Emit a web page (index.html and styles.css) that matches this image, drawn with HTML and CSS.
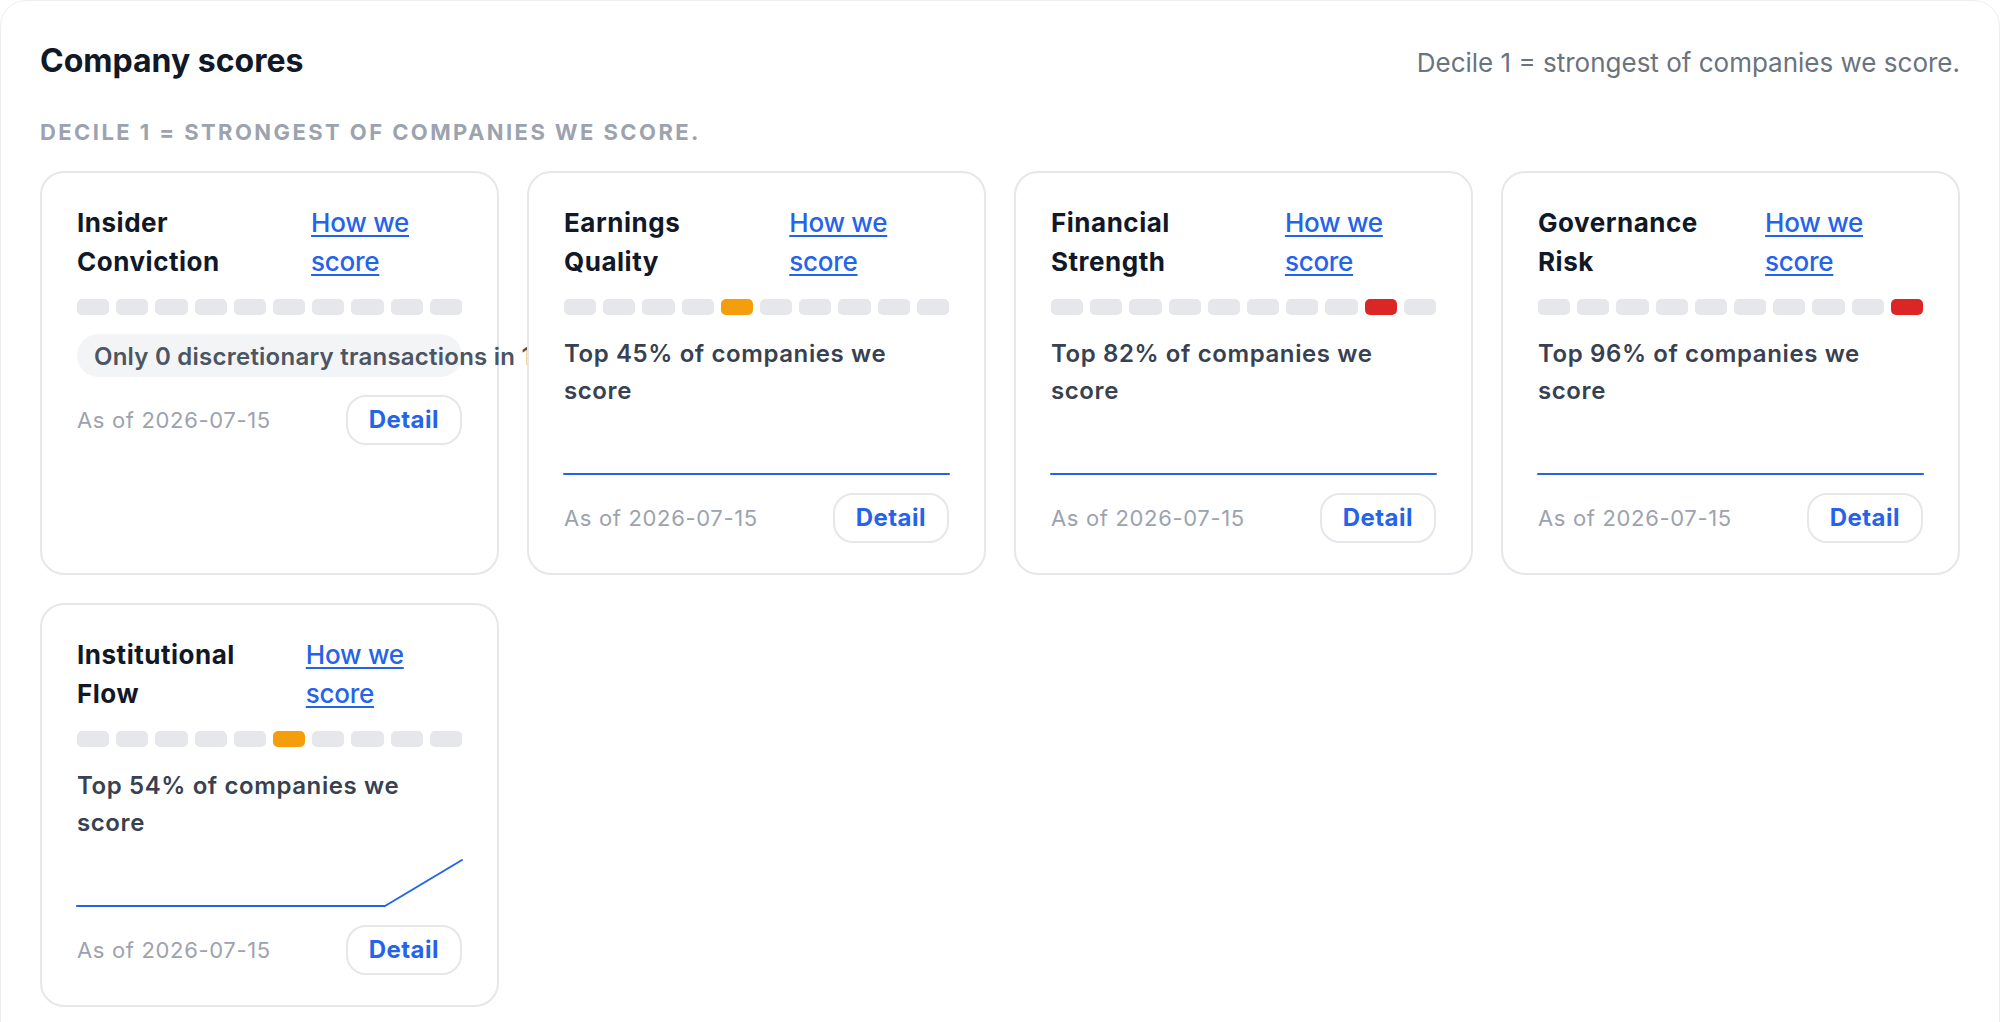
FILE: index.html
```html
<!DOCTYPE html>
<html lang="en">
<head>
<meta charset="utf-8">
<title>Company scores</title>
<link rel="stylesheet" href="styles.css">
</head>
<body>
<section class="panel">
  <header class="panel-head">
    <h2 class="panel-title">Company scores</h2>
    <p class="panel-note">Decile 1 = strongest of companies we score.</p>
  </header>
  <p class="panel-sub">Decile 1 = strongest of companies we score.</p>

  <div class="grid">
    <article class="card">
      <div class="card-head">
        <h3 class="card-title">Insider Conviction</h3>
        <a class="card-link" href="#">How we score</a>
      </div>
      <div class="deciles">
        <span class="seg"></span><span class="seg"></span><span class="seg"></span><span class="seg"></span><span class="seg"></span><span class="seg"></span><span class="seg"></span><span class="seg"></span><span class="seg"></span><span class="seg"></span>
      </div>
      <div class="pill"><span class="pill-text">Only 0 discretionary transactions in 180 days</span></div>
      <div class="card-foot">
        <span class="asof">As of 2026-07-15</span>
        <button class="detail">Detail</button>
      </div>
    </article>

    <article class="card">
      <div class="card-head">
        <h3 class="card-title">Earnings Quality</h3>
        <a class="card-link" href="#">How we score</a>
      </div>
      <div class="deciles">
        <span class="seg"></span><span class="seg"></span><span class="seg"></span><span class="seg"></span><span class="seg amber"></span><span class="seg"></span><span class="seg"></span><span class="seg"></span><span class="seg"></span><span class="seg"></span>
      </div>
      <p class="rank">Top 45% of companies we score</p>
      <svg class="spark" viewBox="0 0 100 48" preserveAspectRatio="none"><polyline points="0,47 20,47 40,47 60,47 80,47 100,47" /></svg>
      <div class="card-foot">
        <span class="asof">As of 2026-07-15</span>
        <button class="detail">Detail</button>
      </div>
    </article>

    <article class="card">
      <div class="card-head">
        <h3 class="card-title">Financial Strength</h3>
        <a class="card-link" href="#">How we score</a>
      </div>
      <div class="deciles">
        <span class="seg"></span><span class="seg"></span><span class="seg"></span><span class="seg"></span><span class="seg"></span><span class="seg"></span><span class="seg"></span><span class="seg"></span><span class="seg red"></span><span class="seg"></span>
      </div>
      <p class="rank">Top 82% of companies we score</p>
      <svg class="spark" viewBox="0 0 100 48" preserveAspectRatio="none"><polyline points="0,47 20,47 40,47 60,47 80,47 100,47" /></svg>
      <div class="card-foot">
        <span class="asof">As of 2026-07-15</span>
        <button class="detail">Detail</button>
      </div>
    </article>

    <article class="card">
      <div class="card-head">
        <h3 class="card-title">Governance Risk</h3>
        <a class="card-link" href="#">How we score</a>
      </div>
      <div class="deciles">
        <span class="seg"></span><span class="seg"></span><span class="seg"></span><span class="seg"></span><span class="seg"></span><span class="seg"></span><span class="seg"></span><span class="seg"></span><span class="seg"></span><span class="seg red"></span>
      </div>
      <p class="rank">Top 96% of companies we score</p>
      <svg class="spark" viewBox="0 0 100 48" preserveAspectRatio="none"><polyline points="0,47 20,47 40,47 60,47 80,47 100,47" /></svg>
      <div class="card-foot">
        <span class="asof">As of 2026-07-15</span>
        <button class="detail">Detail</button>
      </div>
    </article>

    <article class="card">
      <div class="card-head">
        <h3 class="card-title">Institutional Flow</h3>
        <a class="card-link" href="#">How we score</a>
      </div>
      <div class="deciles">
        <span class="seg"></span><span class="seg"></span><span class="seg"></span><span class="seg"></span><span class="seg"></span><span class="seg amber"></span><span class="seg"></span><span class="seg"></span><span class="seg"></span><span class="seg"></span>
      </div>
      <p class="rank">Top 54% of companies we score</p>
      <svg class="spark" viewBox="0 0 100 48" preserveAspectRatio="none"><polyline points="0,47 20,47 40,47 60,47 80,47 100,1" /></svg>
      <div class="card-foot">
        <span class="asof">As of 2026-07-15</span>
        <button class="detail">Detail</button>
      </div>
    </article>
  </div>
</section>
</body>
</html>
```

FILE: styles.css
```css
* { box-sizing: border-box; }

html, body {
  margin: 0;
  padding: 0;
  background: #ffffff;
}

body {
  font-family: Inter, "Noto Sans", "Liberation Sans", sans-serif;
  color: #111827;
}

.panel {
  border: 1px solid #eceef1;
  border-radius: 26px;
  padding: 42px 39px 40px;
}

.panel-head {
  display: flex;
  justify-content: space-between;
  align-items: baseline;
  margin-bottom: 35px;
}

.panel-title {
  margin: 0;
  font-size: 32px;
  line-height: 36px;
  font-weight: 700;
  color: #111827;
  letter-spacing: 0;
}

.panel-note {
  margin: 0;
  font-size: 26px;
  line-height: 36px;
  font-weight: 400;
  color: #6b7280;
}

.panel-sub {
  margin: 0 0 22px;
  font-size: 22px;
  line-height: 33px;
  font-weight: 700;
  text-transform: uppercase;
  letter-spacing: 0.11em;
  color: #9ca3af;
}

.grid {
  display: grid;
  grid-template-columns: repeat(4, 1fr);
  gap: 28px;
}

.card {
  background: #ffffff;
  border: 2px solid #e5e7eb;
  border-radius: 24px;
  padding: 30px 35px 30px;
  display: flex;
  flex-direction: column;
  gap: 18px;
  min-width: 0;
}

.card-head {
  display: flex;
  gap: 24px;
  align-items: flex-start;
}

.card-title {
  margin: 0;
  font-size: 26px;
  line-height: 39px;
  font-weight: 700;
  color: #111827;
  letter-spacing: 0.02em;
}

.card-link {
  font-size: 26px;
  line-height: 39px;
  font-weight: 500;
  color: #2563eb;
  letter-spacing: -0.01em;
  text-decoration: underline;
  text-underline-offset: 3px;
  text-decoration-thickness: 2px;
}

.deciles {
  display: flex;
  gap: 7px;
  height: 16px;
}

.seg {
  flex: 1;
  background: #e5e7eb;
  border-radius: 5px;
}

.seg.amber { background: #f59e0b; }
.seg.red { background: #dc2626; }

.pill {
  margin-top: 1px;
  background: #f3f4f6;
  border-radius: 999px;
  padding: 5px 17px 2px;
  white-space: nowrap;
}

.pill-text {
  font-size: 24px;
  line-height: 36px;
  font-weight: 600;
  color: #4b5563;
  letter-spacing: 0.01em;
}

.rank {
  margin: 2px 0 0;
  font-size: 24px;
  line-height: 37px;
  font-weight: 600;
  color: #374151;
  letter-spacing: 0.025em;
}

.spark {
  display: block;
  width: 100%;
  height: 48px;
  overflow: visible;
}

.spark polyline {
  fill: none;
  stroke: #2563eb;
  stroke-width: 2;
  stroke-linejoin: round;
  stroke-linecap: round;
  vector-effect: non-scaling-stroke;
}

.card-foot {
  display: flex;
  justify-content: space-between;
  align-items: center;
}

.asof {
  font-size: 22px;
  line-height: 33px;
  color: #9ca3af;
  letter-spacing: 0.03em;
}

.detail {
  font-family: inherit;
  font-size: 24px;
  line-height: 36px;
  font-weight: 700;
  color: #2563eb;
  letter-spacing: 0.02em;
  background: #ffffff;
  border: 2px solid #e5e7eb;
  border-radius: 20px;
  padding: 5px 21px;
  cursor: pointer;
}
```
